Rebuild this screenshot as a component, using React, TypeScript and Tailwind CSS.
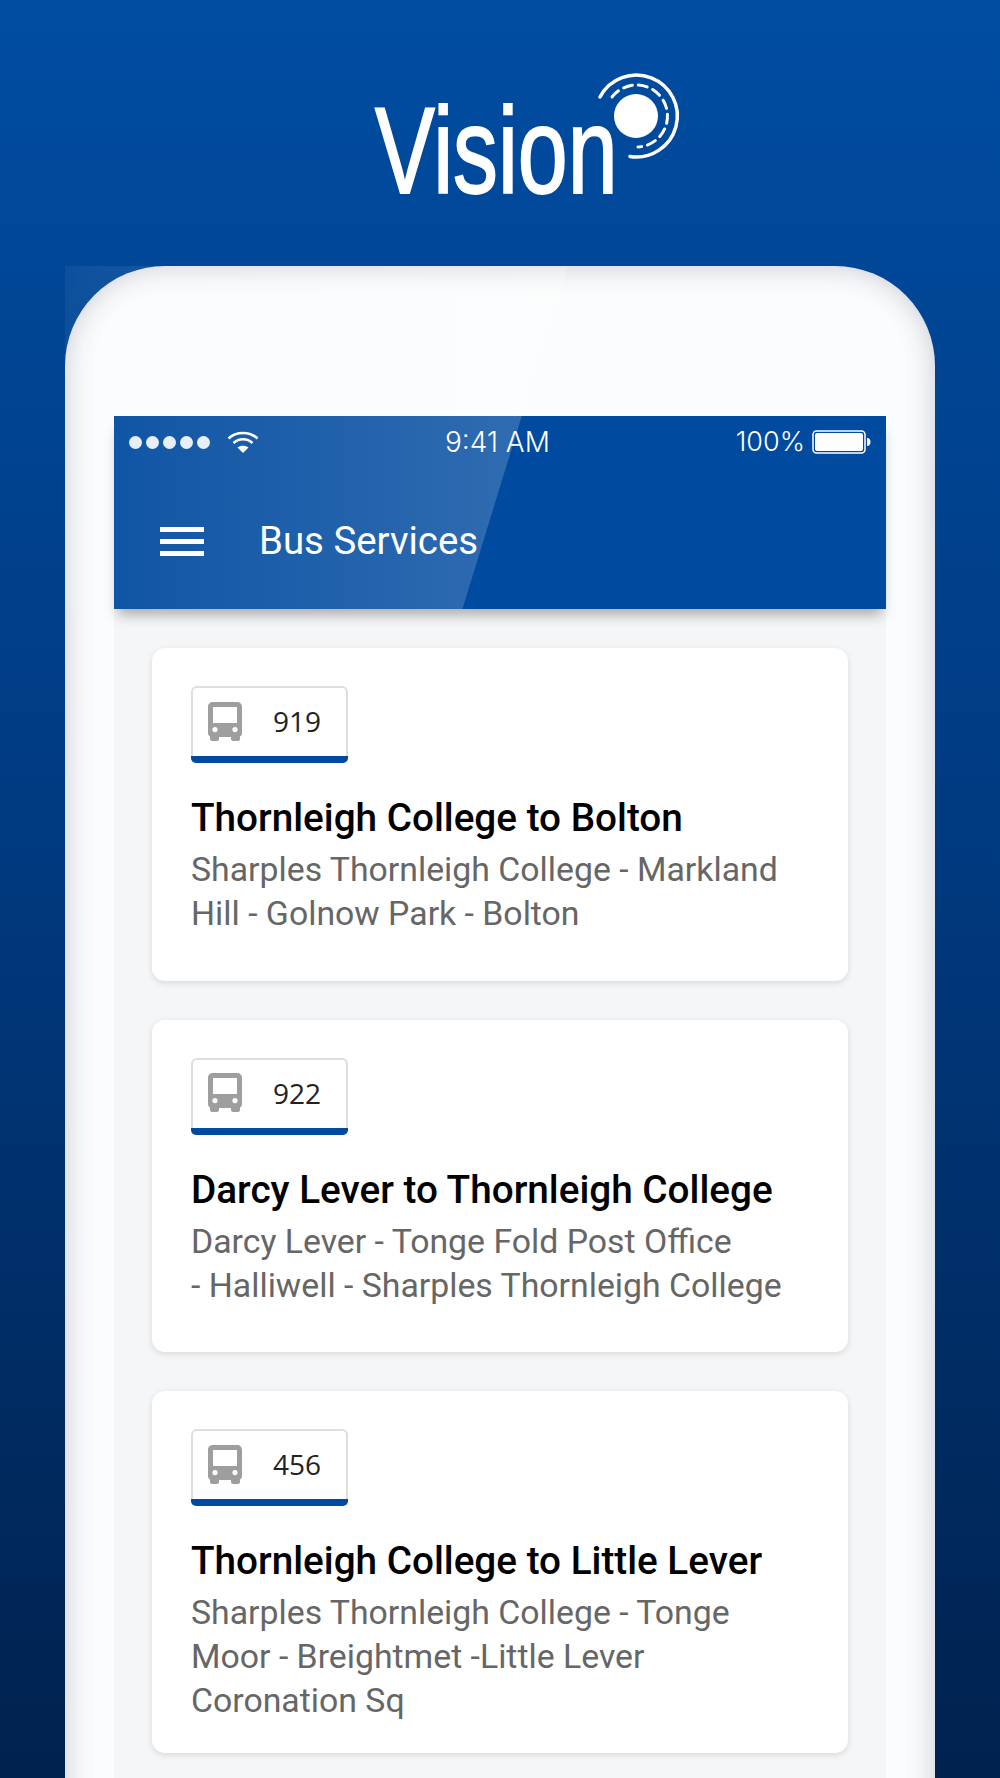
const cards = [
  { no: "919", title: "Thornleigh College to Bolton", lines: ["Sharples Thornleigh College - Markland", "Hill - Golnow Park - Bolton"], last: false },
  { no: "922", title: "Darcy Lever to Thornleigh College", lines: ["Darcy Lever - Tonge Fold Post Office", "- Halliwell - Sharples Thornleigh College"], last: false },
  { no: "456", title: "Thornleigh College to Little Lever", lines: ["Sharples Thornleigh College - Tonge", "Moor - Breightmet -Little Lever", "Coronation Sq"], last: true },
];

function Bus() {
  return (
    <svg width="34" height="39" viewBox="0 0 34 39" className="shrink-0">
      <path
        fillRule="evenodd"
        fill="#9e9e9e"
        d="M5 0H29C32 0 34 2 34 5V31C34 33 33 34 32 34.5V37C32 38 31 39 30 39H25C24 39 23 38 23 37V35H11V37C11 38 10 39 9 39H4C3 39 2 38 2 37V34.5C1 34 0 33 0 31V5C0 2 2 0 5 0ZM5 5V21H29V5ZM7 25A2.6 2.6 0 1 0 7 30.200A2.6 2.6 0 1 0 7 25ZM27 25A2.6 2.6 0 1 0 27 30.200A2.6 2.6 0 1 0 27 25Z"
      />
    </svg>
  );
}

function Card({ no, title, lines, last }: { no: string; title: string; lines: string[]; last: boolean }) {
  return (
    <div className={last ? "rounded-[13px] bg-white pt-[38px] pb-[30px] px-[39px] shadow-[0_2px_6px_rgba(0,0,0,0.12)]" : "rounded-[13px] bg-white pt-[38px] pb-[44.5px] px-[39px] shadow-[0_2px_6px_rgba(0,0,0,0.12)]"}>
      <div className="flex w-[157px] flex-col">
        <div className="flex h-[70px] items-center rounded-t-[6px] border-2 border-b-0 border-[#dedede] pb-[2px] pl-[15px]">
          <Bus />
          <span className="ml-[31px] text-[28px] text-[#222] font-['Open_Sans',sans-serif]">{no}</span>
        </div>
        <div className="h-[7px] rounded-b-[5px] bg-[#004a9f]" />
      </div>
      <div className="mt-[33px] text-[38.7px] leading-[44px] font-medium text-black">{title}</div>
      <div className="mt-[8px] text-[33.8px] leading-[44px] text-[#666]">
        {lines.map((l) => (
          <div key={l}>{l}</div>
        ))}
      </div>
    </div>
  );
}

export default function App() {
  return (
    <div className="relative flex h-[1778px] w-[1000px] flex-col overflow-hidden bg-gradient-to-b from-[#004da2] via-[#003b82] via-[45%] to-[#00224f] font-['Roboto',sans-serif]">
      {/* Logo */}
      <div className="flex h-[266px] shrink-0 items-start pl-[375px] pt-[81px]">
        <span className="origin-left scale-x-[0.735] text-[122px] leading-[140px] text-white [-webkit-text-stroke:2px_white] font-['Liberation_Sans',sans-serif]">Vision</span>
        <svg width="100" height="100" viewBox="0 0 100 100" className="absolute left-[590px] top-[66px]" fill="none" stroke="white" strokeLinecap="round">
          <circle cx="46" cy="50" r="22" fill="white" stroke="none" />
          <path d="M10 31A41 41 0 1 1 40 90.500" strokeWidth="3.500" />
          <path d="M22 31A31 31 0 1 1 48 81" strokeWidth="3" strokeDasharray="9 6" />
        </svg>
      </div>

      {/* Phone */}
      <div className="mx-[65px] h-[1600px] shrink-0 rounded-t-[100px] bg-[#fbfcfd] px-[49px] pt-[150px] shadow-[inset_0_0_28px_rgba(30,40,80,0.24)]">
        <div className="flex h-full flex-col bg-[#f5f6f8]">
          <div className="relative z-10 h-[193px] shrink-0 bg-[#004a9f] shadow-[0_10px_12px_-4px_rgba(0,0,0,0.3)]">
            <div className="flex h-[52px] items-center pl-[15px] pr-[14px] text-[28px] font-light text-white font-['Inter',sans-serif]">
              <div className="flex w-[316px] items-center">
                <div className="flex gap-[4px]">
                  {[0, 1, 2, 3, 4].map((i) => (
                    <span key={i} className="h-[13px] w-[13px] rounded-full bg-white/90" />
                  ))}
                </div>
                <svg width="32" height="24" viewBox="0 0 32 24" className="ml-[17px]" fill="none" stroke="white" strokeWidth="2.500">
                  <path d="M1.500 8.500C9 1 23 1 30.500 8.500" />
                  <path d="M6.500 13C12 8 20 8 25.500 13" />
                  <path d="M16 23L10.500 17.500C13.500 15 18.500 15 21.500 17.500Z" fill="white" stroke="none" />
                </svg>
              </div>
              <span>9:41 AM</span>
              <div className="ml-auto flex items-center">
                <span className="text-[27px]">100%</span>
                <svg width="60" height="24" viewBox="0 0 60 24" className="ml-[7px]">
                  <rect x="1" y="1" width="52" height="22" rx="3.500" fill="none" stroke="white" strokeWidth="1.500" />
                  <rect x="3" y="3" width="48" height="18" rx="2" fill="white" />
                  <path d="M55 8C57.500 8 58.500 10 58.500 12S57.500 16 55 16Z" fill="white" />
                </svg>
              </div>
            </div>
            <div className="flex h-[141px] items-center pl-[46px] pt-[5px]">
              <div className="flex w-[44px] flex-col gap-[7px]">
                <span className="h-[5px] bg-white" />
                <span className="h-[5px] bg-white" />
                <span className="h-[5px] bg-white" />
              </div>
              <span className="ml-[55px] text-[38.4px] text-white">Bus Services</span>
            </div>
          </div>
          <div className="flex flex-col gap-[39px] px-[38px] pt-[39px]">
            {cards.map((c) => (
              <Card key={c.no} {...c} />
            ))}
          </div>
        </div>
      </div>

      {/* Glass glare */}
      <div className="pointer-events-none absolute left-[65px] top-[266px] z-20 h-[343px] w-[503px] bg-gradient-to-r from-white/[0.05] to-white/[0.2] [clip-path:polygon(0_0,100%_0,79%_100%,0_100%)]" />
    </div>
  );
}
